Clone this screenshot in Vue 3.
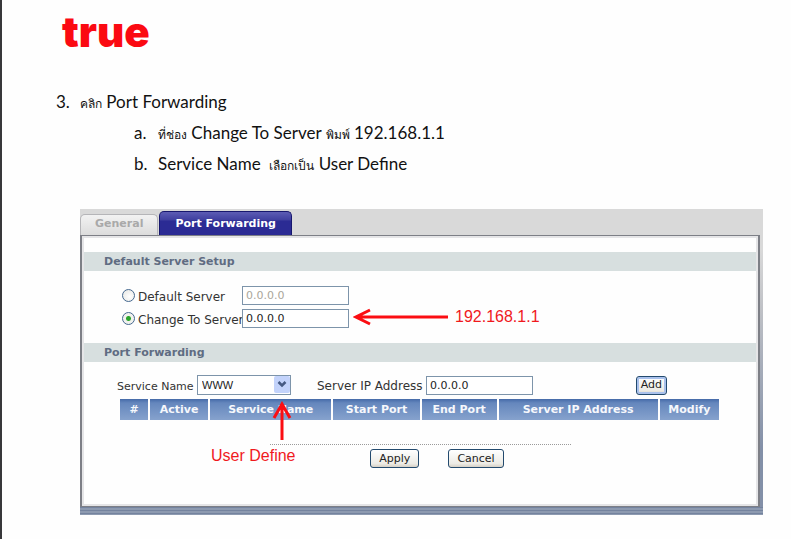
<script setup>
import { ref } from 'vue'

const columns = ['#', 'Active', 'Service Name', 'Start Port', 'End Port', 'Server IP Address', 'Modify']
const mode = ref('change')
const defaultServer = ref('0.0.0.0')
const changeServer = ref('0.0.0.0')
const serverIp = ref('0.0.0.0')
const service = ref('WWW')
</script>

<template>
  <main class="page">
    <header class="logo">true</header>

    <ol class="steps" start="3">
      <li>
        <span class="marker">3.</span>
        <span><span class="thai">คลิก</span> Port Forwarding</span>
      </li>
      <li class="sub">
        <span class="marker">a.</span>
        <span><span class="thai">ที่ช่อง</span> Change To Server <span class="thai">พิมพ์</span> 192.168.1.1</span>
      </li>
      <li class="sub">
        <span class="marker">b.</span>
        <span>Service Name&nbsp; <span class="thai">เลือกเป็น</span> User Define</span>
      </li>
    </ol>

    <section class="router">
      <nav class="tabs">
        <a class="tab" href="#general">General</a>
        <a class="tab active" href="#port-forwarding">Port Forwarding</a>
      </nav>

      <form class="panel" @submit.prevent>
        <h2>Default Server Setup</h2>
        <div class="servers">
          <div class="server-row">
            <label class="choice"><input v-model="mode" type="radio" name="mode" value="default"><span>Default Server</span></label>
            <input v-model="defaultServer" class="field" type="text" aria-label="Default Server address" disabled>
          </div>
          <div class="server-row">
            <label class="choice"><input v-model="mode" type="radio" name="mode" value="change"><span>Change To Server</span></label>
            <input v-model="changeServer" class="field" type="text" aria-label="Change To Server address">
            <span class="hint">
              <svg width="96" height="18" viewBox="0 0 96 18" aria-hidden="true">
                <path d="M95 9H4M17 2L3 9L17 16" fill="none" stroke="#fb0d12" stroke-width="3" />
              </svg>
              <span class="note">192.168.1.1</span>
            </span>
          </div>
        </div>

        <h2>Port Forwarding</h2>
        <div class="forwarding">
          <div class="add-row">
            <label for="service">Service Name</label>
            <span class="select-box">
              <select id="service" v-model="service">
                <option>WWW</option>
                <option>User Define</option>
              </select>
              <svg class="chevron" width="16" height="17" viewBox="0 0 16 17" aria-hidden="true">
                <rect x="0" y="0" width="16" height="17" rx="2" fill="#c3d3fb" />
                <path d="M4.500 6L8 9.500L11.500 6" fill="none" stroke="#465a83" stroke-width="2.500" />
              </svg>
              <span class="callout">
                <svg width="22" height="40" viewBox="0 0 22 40" aria-hidden="true">
                  <path d="M11 39V4M3 17L11 3L19 17" fill="none" stroke="#fb0d12" stroke-width="3" />
                </svg>
              </span>
              <span class="callout-text note">User Define</span>
            </span>
            <label class="ip-label" for="ip">Server IP Address</label>
            <input id="ip" v-model="serverIp" class="field" type="text">
            <button class="add" type="button">Add</button>
          </div>

          <table>
            <thead>
              <tr>
                <th v-for="c in columns" :key="c" scope="col">{{ c }}</th>
              </tr>
            </thead>
          </table>

          <div class="rule"></div>
          <div class="actions">
            <button type="submit">Apply</button>
            <button type="reset">Cancel</button>
          </div>
        </div>
      </form>
    </section>
  </main>
</template>

<style>
body {
  margin: 0;
  background: #fefefe;
}
</style>

<style scoped>
* {
  box-sizing: border-box;
}
.page {
  min-height: 100vh;
  padding: 8px 28px 24px 78px;
  border-left: 2px solid #38383a;
  font-family: "DejaVu Sans", sans-serif;
}
.logo {
  margin-left: -18px;
  height: 48px;
  font: 900 42px/48px Inter, sans-serif;
  color: #fb0a12;
}
.steps {
  list-style: none;
  margin: 30px 0 30px -24px;
  padding: 0;
  font: 17px/31px Lato, sans-serif;
  color: #111;
}
.steps li {
  display: flex;
  height: 31px;
}
.steps .sub {
  padding-left: 78px;
}
.marker {
  flex: 0 0 24px;
}
.thai {
  font-size: 12px;
  line-height: 1;
}
.router {
  background: linear-gradient(#d9d9d9 0, #d9d9d9 40px, #bfc1c6 100px, #8390a8 240px);
  padding: 0 3px 8px 0;
  position: relative;
}
.router::after {
  content: "";
  position: absolute;
  inset: auto 0 0 0;
  height: 8px;
  background: repeating-linear-gradient(#74839e 0 1px, #8d9ab0 1px 3px);
}
.tabs {
  display: flex;
  align-items: flex-end;
  gap: 1px;
  height: 26px;
}
.tab {
  height: 21px;
  padding: 0 14px;
  border: 1px solid #b5b5b8;
  border-bottom: 0;
  border-radius: 5px 5px 0 0;
  background: linear-gradient(#f2f2f2, #dcdcdc);
  font-size: 11px;
  font-weight: bold;
  line-height: 17px;
  color: #a9a9a9;
  text-decoration: none;
}
.tab.active {
  height: 24px;
  padding: 0 15px;
  border-color: #17176e;
  background: linear-gradient(#5c5cb4 0, #3f3f9f 8px, #2b2b94 9px);
  line-height: 23px;
  color: #fff;
}
.panel {
  min-height: 272px;
  padding: 16px 2px 32px;
  border: 1px solid #7d7f86;
  border-width: 1px 2px 1px 2px;
  background: #fefefe;
  box-shadow: inset 0 0 0 2px #e5e5e7;
}
h2 {
  margin: 0;
  padding-left: 20px;
  height: 19px;
  background: #d7dfdf;
  font-size: 11px;
  font-weight: bold;
  line-height: 20px;
  color: #5f6c82;
}
.servers {
  display: grid;
  gap: 4px;
  padding: 15px 0 15px 38px;
}
.server-row {
  display: flex;
  align-items: center;
  height: 19px;
}
.choice {
  display: flex;
  align-items: center;
  gap: 3px;
  width: 120px;
  font-size: 12px;
  color: #333;
  white-space: nowrap;
}
.choice span {
  padding-top: 2px;
}
.choice input {
  appearance: none;
  flex: none;
  width: 13px;
  height: 13px;
  margin: 0;
  border: 1px solid #45688f;
  border-radius: 50%;
  background: radial-gradient(circle at 60% 60%, #fff, #e4e4e0);
}
.choice input:checked {
  background: radial-gradient(circle, #2ba52b 0 2px, #f2f2ee 3px);
}
.field {
  width: 107px;
  height: 19px;
  padding: 0 3px;
  border: 1px solid #7d94aa;
  border-radius: 0;
  background: #fff;
  font: 11px "DejaVu Sans", sans-serif;
  color: #222;
}
.field:disabled {
  color: #aaa69a;
}
.hint {
  display: flex;
  align-items: center;
  gap: 6px;
  padding: 0 0 4px 4px;
}
.note {
  font: 16px/18px "Liberation Sans", sans-serif;
  color: #f0191d;
}
.forwarding {
  padding: 12px 37px 0 33px;
}
.add-row {
  display: flex;
  align-items: center;
  height: 22px;
  font-size: 12px;
  color: #333;
  white-space: nowrap;
}
.add-row label {
  padding-top: 2px;
}
.add-row > label:first-child {
  width: 80px;
  font-size: 11px;
}
.select-box {
  position: relative;
  width: 94px;
  height: 20px;
}
select {
  appearance: none;
  width: 100%;
  height: 20px;
  padding: 0 20px 1px 4px;
  border: 1px solid #7d94aa;
  border-radius: 0;
  background: #fff;
  font: 11px "Liberation Sans", sans-serif;
  color: #222;
}
.chevron {
  position: absolute;
  top: 1px;
  right: 1px;
  pointer-events: none;
}
.callout {
  position: absolute;
  top: 26px;
  left: 74px;
  z-index: 1;
}
.callout-text {
  position: absolute;
  top: 72px;
  left: 14px;
}
.ip-label {
  margin-left: 26px;
  width: 109px;
}
button {
  height: 19px;
  padding: 0 8px;
  border: 1px solid #234a6e;
  border-radius: 3px;
  background: linear-gradient(#fff, #ecebe5 80%, #d6d0c5);
  font: 11px/16px "DejaVu Sans", sans-serif;
  color: #222;
}
.add {
  margin: 0 52px 0 auto;
  padding: 0 4px;
  box-shadow: inset 0 0 0 2px #a9c1ec;
}
table {
  width: calc(100% - 1px);
  margin: 3px 0 0 3px;
  border-collapse: separate;
  border-spacing: 0;
  table-layout: fixed;
}
th {
  height: 21px;
  padding: 0;
  border-right: 2px solid #fefefe;
  background: linear-gradient(#456aa8 0, #6587bd 4px, #86a2cd 100%);
  background-clip: padding-box;
  font-size: 11px;
  font-weight: bold;
  color: #f6f8fc;
  white-space: nowrap;
}
th:nth-child(1) { width: 5%; }
th:nth-child(2) { width: 10%; }
th:nth-child(3) { width: 20.5%; }
th:nth-child(4) { width: 14.7%; }
th:nth-child(5) { width: 12.8%; }
th:nth-child(6) { width: 26.8%; }
.rule {
  width: 50%;
  margin: 24px auto 0 153px;
  border-top: 1px dotted #9a9a9a;
}
.actions {
  display: flex;
  justify-content: center;
  gap: 29px;
  padding-top: 4px;
  margin-left: 38px;
}
</style>
